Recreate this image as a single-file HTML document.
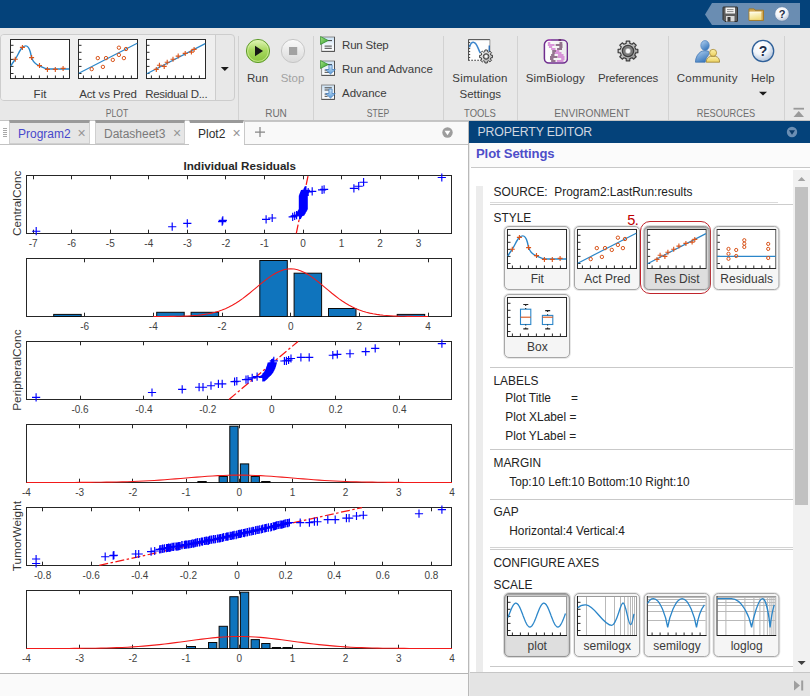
<!DOCTYPE html><html><head><meta charset="utf-8"><title>SimBiology Model Analyzer</title><style>
html,body{margin:0;padding:0;}
body{width:810px;height:696px;overflow:hidden;position:relative;background:#fff;font-family:"Liberation Sans",sans-serif;font-size:12px;color:#333;}
.abs{position:absolute;}
#title{left:0;top:0;width:810px;height:28px;background:#04427a;}
#ts{left:0;top:28px;width:810px;height:92px;background:#e8e8e8;}
#tsline{left:0;top:120px;width:810px;height:1px;background:#c4c4c4;}
.sep{position:absolute;top:36px;width:1px;height:84px;background:#d2d2d2;}
.tl{position:absolute;font-size:11.5px;color:#3c3c3c;white-space:nowrap;transform:translateX(-50%);line-height:14px;}
.tll{position:absolute;font-size:11.5px;color:#3c3c3c;white-space:nowrap;line-height:14px;}
.sec{position:absolute;top:105.8px;font-size:11px;color:#6e6e6e;white-space:nowrap;transform:translateX(-50%) scaleX(0.86);line-height:14px;letter-spacing:0px;}
.tab{position:absolute;top:120px;height:24px;box-sizing:border-box;background:#e6e6e6;border:1px solid #cfcfcf;border-top:3px solid #9a9a9a;font-size:12px;line-height:20px;white-space:nowrap;}
.pt{position:absolute;white-space:nowrap;font-size:11.9px;line-height:14px;color:#222;}
.btn{position:absolute;width:66px;height:64px;box-sizing:border-box;border:1px solid #a8a8a8;border-radius:5px;background:#f5f5f5;box-shadow:0 0 0 1px rgba(150,150,150,0.22);}
.btn.on{background:#dedede;border-color:#949494;box-shadow:inset 0 1px 2px rgba(0,0,0,.35),0 0 0 1px rgba(140,140,140,0.3);}
.btn span{position:absolute;left:0;width:64.6px;text-align:center;top:45.2px;font-size:12px;line-height:14px;color:#3a3a3a;}
.hl{position:absolute;height:1px;background:#c9c9c9;}
</style></head><body>
<div id="title" class="abs"></div>
<svg class="abs" style="left:705px;top:3px" width="96" height="22" viewBox="0 0 96 22" ><polygon points="0,11.5 7,0 95,0 95,22 7,22" fill="#6a8db2"/><g transform="translate(17.5,3.5)"><path d="M0.5,1 Q0.5,0.5 1,0.5 L14.5,0.5 Q15,0.5 15,1 L15,14.5 Q15,15 14.5,15 L2.5,15 L0.5,13 Z" fill="#5e5e5e" stroke="#2f2f2f" stroke-width="1"/><rect x="3" y="1" width="9.5" height="6" fill="#f4f4f4"/><rect x="4.5" y="2.6" width="6.5" height="1" fill="#8a8a8a"/><rect x="4.5" y="4.6" width="6.5" height="1" fill="#8a8a8a"/><rect x="3.5" y="9.5" width="8.5" height="5.5" fill="#d8d8d8"/><rect x="5" y="10.5" width="3" height="4.5" fill="#3a3a3a"/></g><defs><linearGradient id="fg" x1="0" y1="0" x2="0.3" y2="1"><stop offset="0" stop-color="#fffde8"/><stop offset="1" stop-color="#f1de82"/></linearGradient></defs><g transform="translate(43.5,5)"><path d="M0.5,0.9 L5.6,0.9 L6.6,2.2 L15,2.2 L15,12.4 L0.5,12.4 Z" fill="#d2a852" stroke="#a27a2a" stroke-width="1"/><path d="M1,4 L12.9,4 L12.9,11.9 L1,11.9 Z" fill="url(#fg)"/><path d="M1,4 L12.9,4" stroke="#fffef4" stroke-width="0.8"/></g><defs><radialGradient id="hg" cx="0.4" cy="0.3" r="0.8"><stop offset="0" stop-color="#ffffff"/><stop offset="0.5" stop-color="#f2f4f8"/><stop offset="1" stop-color="#a9b7cd"/></radialGradient></defs><circle cx="77" cy="11" r="7.3" fill="url(#hg)" stroke="#5d7fa6" stroke-width="0.8"/><text x="77" y="14.9" font-family="Liberation Sans, sans-serif" font-weight="bold" font-size="11" text-anchor="middle" fill="#1e2e48">?</text></svg>
<div id="ts" class="abs"></div><div id="tsline" class="abs"></div>
<div class="abs" style="left:0;top:34px;width:235px;height:67px;box-sizing:border-box;border:1px solid #cdcdcd;border-radius:4px;background:#e8e8e8;"></div>
<div class="abs" style="left:1px;top:35px;width:214px;height:65px;background:#efefef;border-right:1px solid #cdcdcd;border-radius:3px 0 0 3px;"></div>
<svg class="abs" style="left:10px;top:39px" width="60" height="40" viewBox="0 0 60 40" ><rect x="0.5" y="0.5" width="59" height="39" fill="#fff" stroke="#2a2a2a" stroke-width="1"/><path d="M1,6.3h2.5M1,13.3h2.5M1,20.4h2.5M1,27.4h2.5M1,34.5h2.5M5.4,39v-2.5M13.4,39v-2.5M21.4,39v-2.5M29.4,39v-2.5M37.4,39v-2.5M45.4,39v-2.5M53.4,39v-2.5" stroke="#2a2a2a" stroke-width="1" fill="none"/><path d="M0.8,27 C2.5,24 4,22 5.3,20.2 C8,16 10,10.5 12.4,8.4 C13.8,7.2 14.8,6.9 15.8,6.9 C18,6.9 19.5,10 20.3,13 C21,15.5 21.2,17 21.6,18.6 C23,23 26,25.5 29.5,26.8 C33,28.5 35,29.8 38.5,30 L59.2,30" stroke="#2b86c9" stroke-width="1.4" fill="none"/><path d="M2.8,20.2H7.8M5.3,17.7V22.7" stroke="#d9541a" stroke-width="1.1" fill="none"/><path d="M9.9,8.4H14.9M12.4,5.9V10.9" stroke="#d9541a" stroke-width="1.1" fill="none"/><path d="M19.1,18.6H24.1M21.6,16.1V21.1" stroke="#d9541a" stroke-width="1.1" fill="none"/><path d="M27.0,26.6H32.0M29.5,24.1V29.1" stroke="#d9541a" stroke-width="1.1" fill="none"/><path d="M34.9,30.4H39.9M37.4,27.9V32.9" stroke="#d9541a" stroke-width="1.1" fill="none"/><path d="M42.8,30.4H47.8M45.3,27.9V32.9" stroke="#d9541a" stroke-width="1.1" fill="none"/><path d="M50.6,29.4H55.6M53.1,26.9V31.9" stroke="#d9541a" stroke-width="1.1" fill="none"/></svg>
<svg class="abs" style="left:78px;top:39px" width="60" height="40" viewBox="0 0 60 40" ><rect x="0.5" y="0.5" width="59" height="39" fill="#fff" stroke="#2a2a2a" stroke-width="1"/><path d="M1,6.3h2.5M1,13.3h2.5M1,20.4h2.5M1,27.4h2.5M1,34.5h2.5M5.4,39v-2.5M13.4,39v-2.5M21.4,39v-2.5M29.4,39v-2.5M37.4,39v-2.5M45.4,39v-2.5M53.4,39v-2.5" stroke="#2a2a2a" stroke-width="1" fill="none"/><path d="M0.8,34.2L59.2,4.2" stroke="#2b86c9" stroke-width="1.2" fill="none"/><circle cx="13.7" cy="30.1" r="1.7" stroke="#d9541a" stroke-width="1" fill="none"/><circle cx="19.8" cy="19.1" r="1.7" stroke="#d9541a" stroke-width="1" fill="none"/><circle cx="24.9" cy="27.9" r="1.7" stroke="#d9541a" stroke-width="1" fill="none"/><circle cx="28.0" cy="19.1" r="1.7" stroke="#d9541a" stroke-width="1" fill="none"/><circle cx="34.8" cy="20.9" r="1.7" stroke="#d9541a" stroke-width="1" fill="none"/><circle cx="40.9" cy="8.7" r="1.7" stroke="#d9541a" stroke-width="1" fill="none"/><circle cx="40.9" cy="15.9" r="1.7" stroke="#d9541a" stroke-width="1" fill="none"/><circle cx="45.9" cy="19.1" r="1.7" stroke="#d9541a" stroke-width="1" fill="none"/><circle cx="48.0" cy="10.0" r="1.7" stroke="#d9541a" stroke-width="1" fill="none"/></svg>
<svg class="abs" style="left:146px;top:39px" width="60" height="40" viewBox="0 0 60 40" ><rect x="0.5" y="0.5" width="59" height="39" fill="#fff" stroke="#2a2a2a" stroke-width="1"/><path d="M1,6.3h2.5M1,13.3h2.5M1,20.4h2.5M1,27.4h2.5M1,34.5h2.5M5.4,39v-2.5M13.4,39v-2.5M21.4,39v-2.5M29.4,39v-2.5M37.4,39v-2.5M45.4,39v-2.5M53.4,39v-2.5" stroke="#2a2a2a" stroke-width="1" fill="none"/><path d="M0.8,34.7L59.2,4.6" stroke="#2b86c9" stroke-width="1.2" fill="none"/><path d="M7.8,30.4H12.8M10.3,27.9V32.9" stroke="#d9541a" stroke-width="1.1" fill="none"/><path d="M10.9,26.3H15.9M13.4,23.8V28.8" stroke="#d9541a" stroke-width="1.1" fill="none"/><path d="M15.7,27.4H20.7M18.2,24.9V29.9" stroke="#d9541a" stroke-width="1.1" fill="none"/><path d="M18.7,23.2H23.7M21.2,20.7V25.7" stroke="#d9541a" stroke-width="1.1" fill="none"/><path d="M24.5,20.2H29.5M27.0,17.7V22.7" stroke="#d9541a" stroke-width="1.1" fill="none"/><path d="M29.7,17.1H34.7M32.2,14.6V19.6" stroke="#d9541a" stroke-width="1.1" fill="none"/><path d="M36.7,14.4H41.7M39.2,11.9V16.9" stroke="#d9541a" stroke-width="1.1" fill="none"/><path d="M42.9,13.1H47.9M45.4,10.6V15.6" stroke="#d9541a" stroke-width="1.1" fill="none"/><path d="M45.6,10.4H50.6M48.1,7.9V12.9" stroke="#d9541a" stroke-width="1.1" fill="none"/></svg>
<svg class="abs" style="left:220px;top:66px" width="10" height="6" viewBox="0 0 10 6" ><polygon points="0.8,1 8.8,1 4.8,5" fill="#1a1a1a"/></svg>
<div class="tl" style="left:40px;top:87.32px;font-size:11.5px;letter-spacing:0px;">Fit</div>
<div class="tl" style="left:108px;top:87.32px;font-size:11.5px;letter-spacing:-0.1px;">Act vs Pred</div>
<div class="tl" style="left:176.3px;top:87.32px;font-size:11.5px;letter-spacing:-0.27px;">Residual D...</div>
<div class="sep" style="left:238px"></div>
<div class="sep" style="left:313px"></div>
<div class="sep" style="left:442.5px"></div>
<div class="sep" style="left:516.5px"></div>
<div class="sep" style="left:667.5px"></div>
<div class="sep" style="left:784px"></div>
<div class="sec" style="left:117.2px;transform:translateX(-50%) scaleX(0.784)">PLOT</div>
<div class="sec" style="left:275.5px;transform:translateX(-50%) scaleX(0.91)">RUN</div>
<div class="sec" style="left:378.3px;transform:translateX(-50%) scaleX(0.784)">STEP</div>
<div class="sec" style="left:480px;transform:translateX(-50%) scaleX(0.858)">TOOLS</div>
<div class="sec" style="left:592.2px;transform:translateX(-50%) scaleX(0.929)">ENVIRONMENT</div>
<div class="sec" style="left:726.2px;transform:translateX(-50%) scaleX(0.838)">RESOURCES</div>
<svg class="abs" style="left:244.8px;top:38px" width="26" height="26" viewBox="0 0 26 26" ><defs><linearGradient id="rg" x1="0" y1="0" x2="0" y2="1"><stop offset="0" stop-color="#e4f6bc"/><stop offset="0.45" stop-color="#a9d960"/><stop offset="1" stop-color="#86c23a"/></linearGradient><linearGradient id="sg" x1="0" y1="0" x2="0" y2="1"><stop offset="0" stop-color="#fafafa"/><stop offset="1" stop-color="#dadada"/></linearGradient></defs><circle cx="13" cy="13" r="11.6" fill="url(#rg)" stroke="#5f9c2c" stroke-width="1"/><circle cx="13" cy="13" r="10.4" fill="none" stroke="#d6f0a4" stroke-width="0.9" opacity=".8"/><polygon points="10,7.8 10,18.2 18,13" fill="#161616"/></svg>
<svg class="abs" style="left:279.6px;top:38px" width="26" height="26" viewBox="0 0 26 26" ><circle cx="13" cy="13" r="11.6" fill="url(#sg)" stroke="#c6c6c6" stroke-width="1"/><rect x="9" y="9" width="8.2" height="8" fill="#a2a2a2"/></svg>
<div class="tl" style="left:257.5px;top:70.62px;font-size:11.5px;">Run</div>
<div class="tl" style="left:292.5px;top:70.62px;font-size:11.5px;color:#a2a2a2;">Stop</div>
<svg class="abs" style="left:319.5px;top:35.5px" width="17" height="17" viewBox="0 0 17 17" ><defs><linearGradient id="dga" x1="0" y1="0" x2="0" y2="1"><stop offset="0" stop-color="#c9e0f3"/><stop offset="0.6" stop-color="#f4f8fc"/><stop offset="1" stop-color="#ffffff"/></linearGradient><linearGradient id="tga" x1="0" y1="0" x2="1" y2="1"><stop offset="0" stop-color="#a6e684"/><stop offset="1" stop-color="#2f9a2a"/></linearGradient><linearGradient id="aga" x1="0" y1="0" x2="0" y2="1"><stop offset="0" stop-color="#d4e8f8"/><stop offset="1" stop-color="#5a9ad8"/></linearGradient></defs><rect x="1.6" y="1.0" width="12.9" height="14.4" fill="url(#dga)" stroke="#8c8c8c" stroke-width="1"/><path d="M1.6,15.4H14.5V1.0" stroke="#505050" stroke-width="1" fill="none"/><path d="M8,4.6h4M4.6,10.1h7.2M4.6,12.3h7.2" stroke="#444" stroke-width="1"/><polygon points="0.4,0.5 0.4,8.5 8.3,4.5" fill="url(#tga)" stroke="#2b8a28" stroke-width="0.7"/></svg>
<svg class="abs" style="left:319.5px;top:59.5px" width="17" height="17" viewBox="0 0 17 17" ><defs><linearGradient id="dgb" x1="0" y1="0" x2="0" y2="1"><stop offset="0" stop-color="#c9e0f3"/><stop offset="0.6" stop-color="#f4f8fc"/><stop offset="1" stop-color="#ffffff"/></linearGradient><linearGradient id="tgb" x1="0" y1="0" x2="1" y2="1"><stop offset="0" stop-color="#a6e684"/><stop offset="1" stop-color="#2f9a2a"/></linearGradient><linearGradient id="agb" x1="0" y1="0" x2="0" y2="1"><stop offset="0" stop-color="#d4e8f8"/><stop offset="1" stop-color="#5a9ad8"/></linearGradient></defs><rect x="1.6" y="1.0" width="12.9" height="14.4" fill="url(#dgb)" stroke="#8c8c8c" stroke-width="1"/><path d="M1.6,15.4H14.5V1.0" stroke="#505050" stroke-width="1" fill="none"/><path d="M8,4.6h4M4.6,10.1h7.2M4.6,12.3h7.2" stroke="#444" stroke-width="1"/><polygon points="0.4,0.5 0.4,8.5 8.3,4.5" fill="url(#tgb)" stroke="#2b8a28" stroke-width="0.7"/><path d="M8.9,5.1h3.2v4.4h3.2l-4.8,4.6l-4.8,-4.6h3.2z" fill="url(#agb)" stroke="#3a76b8" stroke-width="0.7"/></svg>
<svg class="abs" style="left:319.5px;top:83.6px" width="17" height="17" viewBox="0 0 17 17" ><defs><linearGradient id="dgc" x1="0" y1="0" x2="0" y2="1"><stop offset="0" stop-color="#c9e0f3"/><stop offset="0.6" stop-color="#f4f8fc"/><stop offset="1" stop-color="#ffffff"/></linearGradient><linearGradient id="tgc" x1="0" y1="0" x2="1" y2="1"><stop offset="0" stop-color="#a6e684"/><stop offset="1" stop-color="#2f9a2a"/></linearGradient><linearGradient id="agc" x1="0" y1="0" x2="0" y2="1"><stop offset="0" stop-color="#d4e8f8"/><stop offset="1" stop-color="#5a9ad8"/></linearGradient></defs><rect x="1.6" y="1.0" width="12.9" height="14.4" fill="url(#dgc)" stroke="#8c8c8c" stroke-width="1"/><path d="M1.6,15.4H14.5V1.0" stroke="#505050" stroke-width="1" fill="none"/><path d="M4.6,3.8h7.2M4.6,6h7.2M4.6,10.1h3M4.6,12.3h3" stroke="#444" stroke-width="1"/><path d="M8.9,5.1h3.2v4.4h3.2l-4.8,4.6l-4.8,-4.6h3.2z" fill="url(#agc)" stroke="#3a76b8" stroke-width="0.7"/></svg>
<div class="tll" style="left:342px;top:38.12px;font-size:11.5px;letter-spacing:-0.17px;">Run Step</div>
<div class="tll" style="left:342px;top:61.92px;font-size:11.5px;">Run and Advance</div>
<div class="tll" style="left:342px;top:85.82px;font-size:11.5px;">Advance</div>
<svg class="abs" style="left:468px;top:39px" width="25" height="25" viewBox="0 0 25 25" ><defs><linearGradient id="g2" x1="0" y1="0" x2="1" y2="1"><stop offset="0" stop-color="#ffffff"/><stop offset="1" stop-color="#a9a9a9"/></linearGradient></defs><rect x="0.5" y="0.5" width="21.5" height="21.2" fill="#fefefe"/><path d="M0.3,0.6H22" stroke="#555" stroke-width="1.1" fill="none"/><path d="M21.9,0.6V21.5" stroke="#9a9a9a" stroke-width="1" fill="none"/><path d="M0.6,0.6V21.5" stroke="#444" stroke-width="1" fill="none"/><path d="M0.6,3.5h1.6M0.6,6.5h1.6M0.6,9.5h1.6M0.6,12.5h1.6M0.6,15.5h1.6M0.6,18.5h1.6" stroke="#444" stroke-width="1" fill="none"/><path d="M0.3,21.3H22" stroke="#333" stroke-width="1.1" fill="none" stroke-dasharray="1.6,1.4"/><path d="M1.5,8.3 C2.5,4.5 4.5,3.2 5.9,3.4 C9.2,3.9 10,10.5 12.4,14" stroke="#3d86cc" stroke-width="1.5" fill="none"/><path d="M21.2,12.5 C21.3,9.5 21.3,8 21.3,6.5" stroke="#2f6fb5" stroke-width="1.4" fill="none"/><path d="M16.91,11.01L19.29,11.01L19.38,12.67L20.61,13.18L21.85,12.07L23.53,13.75L22.42,14.99L22.93,16.22L24.59,16.31L24.59,18.69L22.93,18.78L22.42,20.01L23.53,21.25L21.85,22.93L20.61,21.82L19.38,22.33L19.29,23.99L16.91,23.99L16.82,22.33L15.59,21.82L14.35,22.93L12.67,21.25L13.78,20.01L13.27,18.78L11.61,18.69L11.61,16.31L13.27,16.22L13.78,14.99L12.67,13.75L14.35,12.07L15.59,13.18L16.82,12.67Z" fill="url(#g2)" stroke="#3e3e3e" stroke-width="1" stroke-linejoin="round"/><circle cx="18.1" cy="17.5" r="2.8" fill="#9a9a9a" stroke="#3e3e3e" stroke-width="1"/><circle cx="18.1" cy="17.5" r="1.4" fill="#fafafa"/></svg>
<div class="tl" style="left:480px;top:70.62px;font-size:11.5px;letter-spacing:0.16px;">Simulation</div>
<div class="tl" style="left:480.3px;top:86.52px;font-size:11.5px;">Settings</div>
<svg class="abs" style="left:542.5px;top:38.5px" width="25" height="25" viewBox="0 0 25 25" ><defs><linearGradient id="sbg" x1="0" y1="0" x2="1" y2="0"><stop offset="0" stop-color="#ffffff"/><stop offset="1" stop-color="#ececec"/></linearGradient></defs><rect x="1.4" y="1.1" width="23" height="23" rx="4.5" fill="url(#sbg)" stroke="#6f2d8e" stroke-width="1.5"/><path d="M5.3,1.0H8.3" stroke="#c44fc4" stroke-width="1.15"/><path d="M15.5,1.0H18.2" stroke="#4a1440" stroke-width="1.15"/><path d="M4.8,4.0H7.3" stroke="#c44fc4" stroke-width="1.15"/><path d="M16.5,4.0H19.3" stroke="#4a1440" stroke-width="1.15"/><path d="M4.8,6.0H11.5" stroke="#c44fc4" stroke-width="1.15"/><path d="M12.7,6.0H19.5" stroke="#4a1440" stroke-width="1.15"/><path d="M5.9,8.0H9.2" stroke="#c44fc4" stroke-width="1.15"/><path d="M16.3,8.0H19.5" stroke="#4a1440" stroke-width="1.15"/><path d="M8.1,10.0H12.5" stroke="#c44fc4" stroke-width="1.15"/><path d="M14.1,10.0H19.0" stroke="#4a1440" stroke-width="1.15"/><path d="M9.2,12.0H13.0" stroke="#4a1440" stroke-width="1.15"/><path d="M13.0,12.0H16.3" stroke="#c44fc4" stroke-width="1.15"/><path d="M9.2,14.0H11.9" stroke="#4a1440" stroke-width="1.15"/><path d="M11.9,14.0H18.5" stroke="#c44fc4" stroke-width="1.15"/><path d="M8.1,16.0H11.5" stroke="#4a1440" stroke-width="1.15"/><path d="M14.9,16.0H20.5" stroke="#c44fc4" stroke-width="1.15"/><path d="M7.0,18.0H14.5" stroke="#4a1440" stroke-width="1.15"/><path d="M14.9,18.0H21.5" stroke="#c44fc4" stroke-width="1.15"/><path d="M7.0,20.0H10.5" stroke="#4a1440" stroke-width="1.15"/><path d="M18.2,20.0H21.5" stroke="#c44fc4" stroke-width="1.15"/><path d="M8.1,22.0H12.5" stroke="#4a1440" stroke-width="1.15"/><path d="M13.8,22.0H20.5" stroke="#c44fc4" stroke-width="1.15"/></svg>
<div class="tl" style="left:555.4px;top:70.72px;font-size:11.5px;letter-spacing:0.17px;">SimBiology</div>
<svg class="abs" style="left:617.1px;top:39.7px" width="22" height="22" viewBox="0 0 22 22" ><defs><linearGradient id="gg" x1="0" y1="0" x2="1" y2="1"><stop offset="0" stop-color="#ececec"/><stop offset="1" stop-color="#8c8c8c"/></linearGradient></defs><path d="M9.28,1.15L12.72,1.15L12.84,3.32L15.13,4.26L16.75,2.82L19.18,5.25L17.74,6.87L18.68,9.16L20.85,9.28L20.85,12.72L18.68,12.84L17.74,15.13L19.18,16.75L16.75,19.18L15.13,17.74L12.84,18.68L12.72,20.85L9.28,20.85L9.16,18.68L6.87,17.74L5.25,19.18L2.82,16.75L4.26,15.13L3.32,12.84L1.15,12.72L1.15,9.28L3.32,9.16L4.26,6.87L2.82,5.25L5.25,2.82L6.87,4.26L9.16,3.32Z" fill="url(#gg)" stroke="#3c3c3c" stroke-width="1.2" stroke-linejoin="round"/><circle cx="11" cy="11" r="5.6" fill="#828282" stroke="#3e3e3e" stroke-width="1.3"/><circle cx="11" cy="11" r="3.6" fill="#a8a8a8" stroke="#6a6a6a" stroke-width="0.8"/><circle cx="11" cy="11" r="2.2" fill="#f6f6f6"/></svg>
<div class="tl" style="left:628px;top:70.72px;font-size:11.5px;letter-spacing:-0.16px;">Preferences</div>
<svg class="abs" style="left:695px;top:39.7px" width="25" height="23" viewBox="0 0 25 23" ><defs><linearGradient id="cb" x1="0" y1="0" x2="0.6" y2="1"><stop offset="0" stop-color="#b4d3f1"/><stop offset="1" stop-color="#3a78bd"/></linearGradient><linearGradient id="cy" x1="0" y1="0" x2="0" y2="1"><stop offset="0" stop-color="#fbf0a8"/><stop offset="1" stop-color="#ecd160"/></linearGradient></defs><path d="M0.4,22.2 C0.6,17 3,13.6 6,11.6 C7.5,10.7 12.2,10.4 13.6,11.4 C14.9,12.4 14.2,14.2 12.6,16.2 C11.2,18 10.4,20 10.2,22.2 Z" fill="url(#cb)" stroke="#3a6fae" stroke-width="0.7"/><ellipse cx="10" cy="5.5" rx="4.2" ry="4.9" fill="url(#cb)" stroke="#4a80bd" stroke-width="0.7"/><path d="M11.2,22.2 C11.2,18.6 13,17 15.6,16.4 L20.6,16.4 C23.2,17 24.6,18.6 24.6,22.2 Z" fill="url(#cy)" stroke="#9c8030" stroke-width="0.8"/><circle cx="18.1" cy="12.8" r="3.5" fill="url(#cy)" stroke="#a88c38" stroke-width="0.8"/></svg>
<div class="tl" style="left:707.2px;top:70.72px;font-size:11.5px;letter-spacing:0.32px;">Community</div>
<svg class="abs" style="left:750.8px;top:39.1px" width="24" height="24" viewBox="0 0 24 24" ><defs><radialGradient id="hg2" cx="0.4" cy="0.3" r="0.8"><stop offset="0" stop-color="#ffffff"/><stop offset="0.45" stop-color="#f3f6fa"/><stop offset="1" stop-color="#9db3d0"/></radialGradient></defs><circle cx="12" cy="12" r="10.7" fill="url(#hg2)" stroke="#2f6099" stroke-width="1.3"/><text x="12" y="16.9" font-family="Liberation Sans, sans-serif" font-weight="bold" font-size="14" text-anchor="middle" fill="#1f2f4a">?</text></svg>
<div class="tl" style="left:762.8px;top:70.72px;font-size:11.5px;">Help</div>
<svg class="abs" style="left:758px;top:90.5px" width="10" height="6" viewBox="0 0 10 6" ><polygon points="1,0.8 9,0.8 5,4.6" fill="#1a1a1a"/></svg>
<svg class="abs" style="left:792.5px;top:106.5px" width="12" height="11" viewBox="0 0 12 11" ><rect x="0.5" y="0.8" width="10.5" height="1.8" fill="#9a9a9a"/><polygon points="0.5,10 11,10 5.75,4" fill="#9a9a9a"/></svg>
<div class="abs" style="left:0;top:121px;width:468px;height:24px;background:#fff;"></div>
<div class="abs" style="left:244px;top:121px;width:224px;height:23px;background:#f9f9f9;"></div>
<div class="abs" style="left:244px;top:121px;width:224px;height:1px;background:#c6c6c6;"></div>
<div class="abs" style="left:244px;top:121px;width:1px;height:23px;background:#c9c9c9;"></div>
<div class="abs" style="left:0;top:144px;width:468px;height:1px;background:#c2c2c2;"></div>
<div class="abs" style="left:3px;top:128px;width:4px;height:9px;background:repeating-linear-gradient(#a8a8a8 0,#a8a8a8 1px,#fff 1px,#fff 2px);"></div>
<div class="tab" style="left:9px;width:81px;"><span style="position:absolute;left:8px;top:0.8px;color:#4848cc">Program2</span><span style="position:absolute;left:67.5px;top:0.2px;color:#959595;font-size:14px;">×</span></div>
<div class="tab" style="left:95px;width:90px;"><span style="position:absolute;left:8px;top:0.8px;color:#7a7a7a">Datasheet3</span><span style="position:absolute;left:77px;top:0.2px;color:#959595;font-size:14px;">×</span></div>
<div class="tab" style="left:189px;width:55px;background:#fff;border-color:#fff;border-top:3px solid #9a9a9a;height:25px;"><span style="position:absolute;left:8px;top:0.8px;color:#2c2c2c">Plot2</span><span style="position:absolute;left:42.5px;top:0.2px;color:#959595;font-size:14px;">×</span></div>
<svg class="abs" style="left:254px;top:126px" width="12" height="12" viewBox="0 0 12 12" ><path d="M6,1V11M1,6H11" stroke="#868686" stroke-width="1.25" fill="none"/></svg>
<svg class="abs" style="left:442px;top:126.5px" width="11" height="11" viewBox="0 0 11 11" ><circle cx="5.5" cy="5.5" r="5.2" fill="#9d9d9d"/><polygon points="2.6,3.8 8.4,3.8 5.5,8.2" fill="#fff"/></svg>
<div class="abs" style="left:468px;top:121px;width:1px;height:575px;background:#b9b9b9;"></div>
<div class="abs" style="left:469px;top:121px;width:1px;height:575px;background:#e9e9e9;"></div>
<div class="abs" style="left:0;top:673px;width:468px;height:23px;background:#fafafa;border-top:1px solid #b4b4b4;box-sizing:border-box;"></div>
<div class="abs" style="left:469px;top:121px;width:341px;height:22px;background:#04427a;"></div>
<div class="pt" style="left:477.5px;top:125.04px;font-size:12.3px;color:#d0d7e0;letter-spacing:-0.15px;">PROPERTY EDITOR</div>
<svg class="abs" style="left:786px;top:126px" width="12" height="12" viewBox="0 0 12 12" ><circle cx="6" cy="6" r="5.2" fill="#6b8eb3"/><polygon points="3,4.2 9,4.2 6,8.8" fill="#0b3a68"/></svg>
<div class="abs" style="left:470px;top:143px;width:340px;height:24px;background:#fbfbfb;"></div>
<div class="pt" style="left:476px;top:146.96px;font-size:13.1px;color:#4e4ec9;font-weight:bold;letter-spacing:-0.12px;">Plot Settings</div>
<div class="hl" style="left:471px;top:167px;width:339px;background:#c8c8c8"></div>
<div class="abs" style="left:475.5px;top:186px;width:7.5px;height:486px;background:#ececec;"></div>
<div class="abs" style="left:793px;top:170px;width:17px;height:502px;background:#f1f1f1;"></div>
<div class="abs" style="left:795px;top:187px;width:13px;height:318px;background:#c1c1c1;"></div>
<svg class="abs" style="left:797px;top:176px" width="10" height="6" viewBox="0 0 10 6" ><polygon points="0.8,5 8.4,5 4.6,1" fill="#a3a3a3"/></svg>
<svg class="abs" style="left:797px;top:660px" width="10" height="6" viewBox="0 0 10 6" ><polygon points="0.6,1 8.6,1 4.6,5" fill="#404040"/></svg>
<div class="pt" style="left:493.5px;top:185.38px;font-size:11.9px;">SOURCE:&nbsp; Program2:LastRun:results</div>
<div class="hl" style="left:489.5px;top:201.6px;width:288.5px;background:#dadada"></div>
<div class="hl" style="left:489.5px;top:204px;width:303.5px;background:#cdcdcd"></div>
<div class="pt" style="left:493.5px;top:210.58px;font-size:11.9px;">STYLE</div>
<div class="btn" style="left:504px;top:226px;transform:translateX(0px);"><svg style="position:absolute;left:2px;top:2px" width="60" height="40" viewBox="0 0 60 40"><rect x="0.5" y="0.5" width="59" height="39" fill="#fff" stroke="#2a2a2a" stroke-width="1"/><path d="M1,6.3h2.5M1,13.3h2.5M1,20.4h2.5M1,27.4h2.5M1,34.5h2.5M5.4,39v-2.5M13.4,39v-2.5M21.4,39v-2.5M29.4,39v-2.5M37.4,39v-2.5M45.4,39v-2.5M53.4,39v-2.5" stroke="#2a2a2a" stroke-width="1" fill="none"/><path d="M0.8,27 C2.5,24 4,22 5.3,20.2 C8,16 10,10.5 12.4,8.4 C13.8,7.2 14.8,6.9 15.8,6.9 C18,6.9 19.5,10 20.3,13 C21,15.5 21.2,17 21.6,18.6 C23,23 26,25.5 29.5,26.8 C33,28.5 35,29.8 38.5,30 L59.2,30" stroke="#2b86c9" stroke-width="1.4" fill="none"/><path d="M2.8,20.2H7.8M5.3,17.7V22.7" stroke="#d9541a" stroke-width="1.1" fill="none"/><path d="M9.9,8.4H14.9M12.4,5.9V10.9" stroke="#d9541a" stroke-width="1.1" fill="none"/><path d="M19.1,18.6H24.1M21.6,16.1V21.1" stroke="#d9541a" stroke-width="1.1" fill="none"/><path d="M27.0,26.6H32.0M29.5,24.1V29.1" stroke="#d9541a" stroke-width="1.1" fill="none"/><path d="M34.9,30.4H39.9M37.4,27.9V32.9" stroke="#d9541a" stroke-width="1.1" fill="none"/><path d="M42.8,30.4H47.8M45.3,27.9V32.9" stroke="#d9541a" stroke-width="1.1" fill="none"/><path d="M50.6,29.4H55.6M53.1,26.9V31.9" stroke="#d9541a" stroke-width="1.1" fill="none"/></svg><span>Fit</span></div>
<div class="btn" style="left:574px;top:226px;transform:translateX(0px);"><svg style="position:absolute;left:2px;top:2px" width="60" height="40" viewBox="0 0 60 40"><rect x="0.5" y="0.5" width="59" height="39" fill="#fff" stroke="#2a2a2a" stroke-width="1"/><path d="M1,6.3h2.5M1,13.3h2.5M1,20.4h2.5M1,27.4h2.5M1,34.5h2.5M5.4,39v-2.5M13.4,39v-2.5M21.4,39v-2.5M29.4,39v-2.5M37.4,39v-2.5M45.4,39v-2.5M53.4,39v-2.5" stroke="#2a2a2a" stroke-width="1" fill="none"/><path d="M0.8,34.2L59.2,4.2" stroke="#2b86c9" stroke-width="1.2" fill="none"/><circle cx="13.7" cy="30.1" r="1.7" stroke="#d9541a" stroke-width="1" fill="none"/><circle cx="19.8" cy="19.1" r="1.7" stroke="#d9541a" stroke-width="1" fill="none"/><circle cx="24.9" cy="27.9" r="1.7" stroke="#d9541a" stroke-width="1" fill="none"/><circle cx="28.0" cy="19.1" r="1.7" stroke="#d9541a" stroke-width="1" fill="none"/><circle cx="34.8" cy="20.9" r="1.7" stroke="#d9541a" stroke-width="1" fill="none"/><circle cx="40.9" cy="8.7" r="1.7" stroke="#d9541a" stroke-width="1" fill="none"/><circle cx="40.9" cy="15.9" r="1.7" stroke="#d9541a" stroke-width="1" fill="none"/><circle cx="45.9" cy="19.1" r="1.7" stroke="#d9541a" stroke-width="1" fill="none"/><circle cx="48.0" cy="10.0" r="1.7" stroke="#d9541a" stroke-width="1" fill="none"/></svg><span>Act Pred</span></div>
<div class="abs" style="left:640px;top:221.2px;width:71px;height:73px;box-sizing:border-box;border:1.4px solid #c0242c;border-radius:10px;"></div>
<div class="btn on" style="left:644px;top:226px;transform:translateX(-0.3px);"><svg style="position:absolute;left:2px;top:2px" width="60" height="40" viewBox="0 0 60 40"><rect x="0.5" y="0.5" width="59" height="39" fill="#fff" stroke="#2a2a2a" stroke-width="1"/><path d="M1,6.3h2.5M1,13.3h2.5M1,20.4h2.5M1,27.4h2.5M1,34.5h2.5M5.4,39v-2.5M13.4,39v-2.5M21.4,39v-2.5M29.4,39v-2.5M37.4,39v-2.5M45.4,39v-2.5M53.4,39v-2.5" stroke="#2a2a2a" stroke-width="1" fill="none"/><path d="M0.8,34.7L59.2,4.6" stroke="#2b86c9" stroke-width="1.2" fill="none"/><path d="M7.8,30.4H12.8M10.3,27.9V32.9" stroke="#d9541a" stroke-width="1.1" fill="none"/><path d="M10.9,26.3H15.9M13.4,23.8V28.8" stroke="#d9541a" stroke-width="1.1" fill="none"/><path d="M15.7,27.4H20.7M18.2,24.9V29.9" stroke="#d9541a" stroke-width="1.1" fill="none"/><path d="M18.7,23.2H23.7M21.2,20.7V25.7" stroke="#d9541a" stroke-width="1.1" fill="none"/><path d="M24.5,20.2H29.5M27.0,17.7V22.7" stroke="#d9541a" stroke-width="1.1" fill="none"/><path d="M29.7,17.1H34.7M32.2,14.6V19.6" stroke="#d9541a" stroke-width="1.1" fill="none"/><path d="M36.7,14.4H41.7M39.2,11.9V16.9" stroke="#d9541a" stroke-width="1.1" fill="none"/><path d="M42.9,13.1H47.9M45.4,10.6V15.6" stroke="#d9541a" stroke-width="1.1" fill="none"/><path d="M45.6,10.4H50.6M48.1,7.9V12.9" stroke="#d9541a" stroke-width="1.1" fill="none"/></svg><span>Res Dist</span></div>
<div class="btn" style="left:714px;top:226px;transform:translateX(-0.6px);"><svg style="position:absolute;left:2px;top:2px" width="60" height="40" viewBox="0 0 60 40"><rect x="0.5" y="0.5" width="59" height="39" fill="#fff" stroke="#2a2a2a" stroke-width="1"/><path d="M1,6.3h2.5M1,13.3h2.5M1,20.4h2.5M1,27.4h2.5M1,34.5h2.5M5.4,39v-2.5M13.4,39v-2.5M21.4,39v-2.5M29.4,39v-2.5M37.4,39v-2.5M45.4,39v-2.5M53.4,39v-2.5" stroke="#2a2a2a" stroke-width="1" fill="none"/><path d="M0.8,27.4H59.2" stroke="#2b86c9" stroke-width="1.2" fill="none"/><circle cx="12.1" cy="19.9" r="1.6" stroke="#d9541a" stroke-width="1" fill="none"/><circle cx="12.1" cy="24.8" r="1.6" stroke="#d9541a" stroke-width="1" fill="none"/><circle cx="12.1" cy="29.8" r="1.6" stroke="#d9541a" stroke-width="1" fill="none"/><circle cx="19.8" cy="21.0" r="1.6" stroke="#d9541a" stroke-width="1" fill="none"/><circle cx="19.8" cy="27.0" r="1.6" stroke="#d9541a" stroke-width="1" fill="none"/><circle cx="27.9" cy="11.2" r="1.6" stroke="#d9541a" stroke-width="1" fill="none"/><circle cx="27.9" cy="14.7" r="1.6" stroke="#d9541a" stroke-width="1" fill="none"/><circle cx="27.9" cy="18.0" r="1.6" stroke="#d9541a" stroke-width="1" fill="none"/><circle cx="51.8" cy="14.9" r="1.6" stroke="#d9541a" stroke-width="1" fill="none"/><circle cx="51.8" cy="19.9" r="1.6" stroke="#d9541a" stroke-width="1" fill="none"/><circle cx="51.8" cy="29.0" r="1.6" stroke="#d9541a" stroke-width="1" fill="none"/></svg><span>Residuals</span></div>
<div class="btn" style="left:504px;top:294px;transform:translateX(0px);"><svg style="position:absolute;left:2px;top:2px" width="60" height="40" viewBox="0 0 60 40"><rect x="0.5" y="0.5" width="59" height="39" fill="#fff" stroke="#2a2a2a" stroke-width="1"/><path d="M1,6.3h2.5M1,13.3h2.5M1,20.4h2.5M1,27.4h2.5M1,34.5h2.5M5.4,39v-2.5M13.4,39v-2.5M21.4,39v-2.5M29.4,39v-2.5M37.4,39v-2.5M45.4,39v-2.5M53.4,39v-2.5" stroke="#2a2a2a" stroke-width="1" fill="none"/><rect x="13.5" y="12.2" width="10.3" height="15.3" fill="#fff" stroke="#2b86c9" stroke-width="1.1"/><path d="M13.5,20.2h10.3" stroke="#d9541a" stroke-width="1.1"/><path d="M16.3,7.5h5M16.3,31.9h5M18.7,7.5v1.5M18.7,30.5v1.4M18.7,11v1M18.7,27.5v1" stroke="#222" stroke-width="1.1" fill="none"/><rect x="35.4" y="18.4" width="10.4" height="9.1" fill="#fff" stroke="#2b86c9" stroke-width="1.1"/><path d="M35.4,20.2h10.4" stroke="#d9541a" stroke-width="1.1"/><path d="M38.2,13.6h5M38.2,31.9h5M40.6,13.6v1.5M40.6,30.5v1.4M40.6,17.3v1M40.6,27.5v1" stroke="#222" stroke-width="1.1" fill="none"/></svg><span>Box</span></div>
<div class="pt" style="left:627.2px;top:212.64px;font-size:14.6px;color:#c00000;letter-spacing:-0.6px;">5.</div>
<div class="hl" style="left:489.5px;top:367px;width:303.5px;"></div>
<div class="pt" style="left:493.5px;top:373.88px;font-size:11.9px;">LABELS</div>
<div class="pt" style="left:505.3px;top:390.68px;font-size:11.9px;">Plot Title</div>
<div class="pt" style="left:571px;top:390.68px;font-size:11.9px;">=</div>
<div class="pt" style="left:505.3px;top:410.38px;font-size:11.9px;">Plot XLabel =</div>
<div class="pt" style="left:505.3px;top:429.38px;font-size:11.9px;">Plot YLabel =</div>
<div class="hl" style="left:489.5px;top:449.3px;width:303.5px;"></div>
<div class="pt" style="left:493.5px;top:455.58px;font-size:11.9px;">MARGIN</div>
<div class="pt" style="left:509.2px;top:474.68px;font-size:11.9px;">Top:10 Left:10 Bottom:10 Right:10</div>
<div class="hl" style="left:489.5px;top:498.5px;width:303.5px;"></div>
<div class="pt" style="left:493.5px;top:504.98px;font-size:11.9px;">GAP</div>
<div class="pt" style="left:509.2px;top:523.78px;font-size:11.9px;">Horizontal:4 Vertical:4</div>
<div class="hl" style="left:489.5px;top:547px;width:303.5px;background:#d4d4d4"></div>
<div class="hl" style="left:489.5px;top:549px;width:303.5px;background:#cdcdcd"></div>
<div class="pt" style="left:493.5px;top:556.38px;font-size:11.9px;">CONFIGURE AXES</div>
<div class="pt" style="left:493.5px;top:577.88px;font-size:11.9px;">SCALE</div>
<div class="btn on" style="left:504px;top:593px;transform:translateX(0px);"><svg style="position:absolute;left:2px;top:2px" width="60" height="40" viewBox="0 0 60 40"><rect x="0.5" y="0.5" width="59" height="39" fill="#fff" stroke="#9c9c9c" stroke-width="1"/><path d="M0.5,0V39.5H60" stroke="#1e1e1e" stroke-width="1" fill="none"/><path d="M1,6.3h2.5M1,13.3h2.5M1,20.4h2.5M1,27.4h2.5M1,34.5h2.5M5.4,39v-2.5M13.4,39v-2.5M21.4,39v-2.5M29.4,39v-2.5M37.4,39v-2.5M45.4,39v-2.5M53.4,39v-2.5" stroke="#2a2a2a" stroke-width="1" fill="none"/><path d="M1.0,21.5L1.5,20.2L2.0,18.8L2.5,17.5L3.0,16.2L3.5,14.9L4.0,13.7L4.5,12.5L5.0,11.5L5.5,10.5L6.0,9.6L6.5,8.9L7.0,8.3L7.5,7.8L8.0,7.4L8.5,7.2L9.0,7.2L9.5,7.3L10.0,7.6L10.5,8.0L11.0,8.5L11.5,9.2L12.0,10.0L12.5,10.9L13.0,11.9L13.5,13.0L14.0,14.2L14.5,15.4L15.0,16.7L15.5,18.0L16.0,19.4L16.5,20.7L17.0,22.0L17.5,23.3L18.0,24.5L18.5,25.7L19.0,26.7L19.5,27.7L20.0,28.6L20.5,29.3L21.0,29.9L21.5,30.4L22.0,30.8L22.5,31.0L23.0,31.0L23.5,30.9L24.0,30.6L24.5,30.2L25.0,29.7L25.5,29.0L26.0,28.2L26.5,27.3L27.0,26.3L27.5,25.2L28.0,24.0L28.5,22.8L29.0,21.5L29.5,20.2L30.0,18.8L30.5,17.5L31.0,16.2L31.5,14.9L32.0,13.7L32.5,12.5L33.0,11.5L33.5,10.5L34.0,9.6L34.5,8.9L35.0,8.3L35.5,7.8L36.0,7.4L36.5,7.2L37.0,7.2L37.5,7.3L38.0,7.6L38.5,8.0L39.0,8.5L39.5,9.2L40.0,10.0L40.5,10.9L41.0,11.9L41.5,13.0L42.0,14.2L42.5,15.4L43.0,16.7L43.5,18.0L44.0,19.4L44.5,20.7L45.0,22.0L45.5,23.3L46.0,24.5L46.5,25.7L47.0,26.7L47.5,27.7L48.0,28.6L48.5,29.3L49.0,29.9L49.5,30.4L50.0,30.8L50.5,31.0L51.0,31.0L51.5,30.9L52.0,30.6L52.5,30.2L53.0,29.7L53.5,29.0L54.0,28.2L54.5,27.3L55.0,26.3L55.5,25.2L56.0,24.0L56.5,22.8L57.0,21.5L57.5,20.2L58.0,18.8L58.5,17.5" stroke="#2b86c9" stroke-width="1.3" fill="none" stroke-linejoin="round"/></svg><span>plot</span></div>
<div class="btn" style="left:574px;top:593px;transform:translateX(0px);"><svg style="position:absolute;left:2px;top:2px" width="60" height="40" viewBox="0 0 60 40"><rect x="0.5" y="0.5" width="59" height="39" fill="#fff" stroke="#9c9c9c"/><path d="M9.5,1V39M28.5,1V39M37.5,1V39M43.5,1V39M47.5,1V39M51,1V39M53.5,1V39M55.5,1V39M57.5,1V39" stroke="#b9b9b9" stroke-width="1" fill="none"/><path d="M0.5,0V39.5H60" stroke="#1e1e1e" stroke-width="1" fill="none"/><path d="M1,6.3h2.5M1,13.3h2.5M1,20.4h2.5M1,27.4h2.5M1,34.5h2.5" stroke="#2a2a2a" stroke-width="1" fill="none"/><path d="M0.8,11.8 C3,9.5 6,8.7 9,8.9 C18,9.5 26,29.3 34.7,29.3 C40,29.3 43,7 46.1,7 C49,7 51,28.7 53.7,28.7 C55.3,28.7 56,22 57,17.8" stroke="#2b86c9" stroke-width="1.3" fill="none"/></svg><span>semilogx</span></div>
<div class="btn" style="left:644px;top:593px;transform:translateX(-0.3px);"><svg style="position:absolute;left:2px;top:2px" width="60" height="40" viewBox="0 0 60 40"><rect x="0.5" y="0.5" width="59" height="39" fill="#fff" stroke="#9c9c9c"/><path d="M1,1.5H59M1,3.5H59M1,6.5H59M1,9.5H59M1,15.5H59M1,24.5H59" stroke="#b9b9b9" stroke-width="1" fill="none"/><path d="M0.5,0V39.5H60" stroke="#1e1e1e" stroke-width="1" fill="none"/><path d="M5.4,39v-2.5M13.4,39v-2.5M21.4,39v-2.5M29.4,39v-2.5M37.4,39v-2.5M45.4,39v-2.5M53.4,39v-2.5" stroke="#2a2a2a" stroke-width="1" fill="none"/><path d="M0.8,7.5 C2.5,4 4.5,2.6 6.8,2.6 C13.5,2.6 19.3,21 21,31.4 C22.7,21 28.7,2.6 35.4,2.6 C42.1,2.6 48.1,21 49.8,31.4 C51.3,22 54.5,13 57.7,8.9" stroke="#2b86c9" stroke-width="1.3" fill="none"/></svg><span>semilogy</span></div>
<div class="btn" style="left:714px;top:593px;transform:translateX(-0.6px);"><svg style="position:absolute;left:2px;top:2px" width="60" height="40" viewBox="0 0 60 40"><rect x="0.5" y="0.5" width="59" height="39" fill="#fff" stroke="#9c9c9c"/><path d="M9.5,1V39M28.5,1V39M37.5,1V39M43.5,1V39M47.5,1V39M51,1V39M53.5,1V39M55.5,1V39M57.5,1V39" stroke="#b9b9b9" stroke-width="1" fill="none"/><path d="M1,1.5H59M1,3.5H59M1,6.5H59M1,9.5H59M1,15.5H59M1,24.5H59" stroke="#b9b9b9" stroke-width="1" fill="none"/><path d="M0.5,0V39.5H60" stroke="#1e1e1e" stroke-width="1" fill="none"/><path d="M0.8,2.6 L15,2.6 C26,2.6 33.6,22 35.2,31.4 C36.8,22 42,2.6 46.1,2.6 C50,2.6 52.8,22 53.7,31.4 C54.6,23 56.3,14 57.8,8.9" stroke="#2b86c9" stroke-width="1.3" fill="none"/></svg><span>loglog</span></div>
<div class="hl" style="left:489.5px;top:666px;width:303.5px;"></div>
<div class="abs" style="left:470px;top:672px;width:340px;height:24px;background:#e4e4e4;border-top:1px solid #c6c6c6;box-sizing:border-box;"></div>
<svg class="abs" style="left:793px;top:679.5px" width="12" height="11" viewBox="0 0 12 11" ><polygon points="1,0.5 1,10.5 7,5.5" fill="#9e9e9e"/><rect x="8.2" y="0.5" width="2" height="10" fill="#9e9e9e"/></svg>
<svg class="abs" style="left:0;top:145px" width="468" height="528" viewBox="0 145 468 528"><path d="M33.5,233.5v-3.8M33.5,175.5v3.8M71.5,233.5v-3.8M71.5,175.5v3.8M110.5,233.5v-3.8M110.5,175.5v3.8M148.5,233.5v-3.8M148.5,175.5v3.8M187.5,233.5v-3.8M187.5,175.5v3.8M225.5,233.5v-3.8M225.5,175.5v3.8M264.5,233.5v-3.8M264.5,175.5v3.8M303.5,233.5v-3.8M303.5,175.5v3.8M341.5,233.5v-3.8M341.5,175.5v3.8M380.5,233.5v-3.8M380.5,175.5v3.8M418.5,233.5v-3.8M418.5,175.5v3.8" stroke="#262626" stroke-width="1" fill="none"/><rect x="26.5" y="175.5" width="425.0" height="58.0" fill="none" stroke="#262626" stroke-width="1"/><text x="33.15" y="247.3" font-family="Liberation Sans, sans-serif" font-size="10" fill="#3f3f3f" text-anchor="middle">-7</text><text x="71.70" y="247.3" font-family="Liberation Sans, sans-serif" font-size="10" fill="#3f3f3f" text-anchor="middle">-6</text><text x="110.25" y="247.3" font-family="Liberation Sans, sans-serif" font-size="10" fill="#3f3f3f" text-anchor="middle">-5</text><text x="148.80" y="247.3" font-family="Liberation Sans, sans-serif" font-size="10" fill="#3f3f3f" text-anchor="middle">-4</text><text x="187.35" y="247.3" font-family="Liberation Sans, sans-serif" font-size="10" fill="#3f3f3f" text-anchor="middle">-3</text><text x="225.90" y="247.3" font-family="Liberation Sans, sans-serif" font-size="10" fill="#3f3f3f" text-anchor="middle">-2</text><text x="264.45" y="247.3" font-family="Liberation Sans, sans-serif" font-size="10" fill="#3f3f3f" text-anchor="middle">-1</text><text x="303.00" y="247.3" font-family="Liberation Sans, sans-serif" font-size="10" fill="#3f3f3f" text-anchor="middle">0</text><text x="341.55" y="247.3" font-family="Liberation Sans, sans-serif" font-size="10" fill="#3f3f3f" text-anchor="middle">1</text><text x="380.10" y="247.3" font-family="Liberation Sans, sans-serif" font-size="10" fill="#3f3f3f" text-anchor="middle">2</text><text x="418.65" y="247.3" font-family="Liberation Sans, sans-serif" font-size="10" fill="#3f3f3f" text-anchor="middle">3</text><path d="M84.5,316.5v-3.8M84.5,258.5v3.8M153.5,316.5v-3.8M153.5,258.5v3.8M222.5,316.5v-3.8M222.5,258.5v3.8M290.5,316.5v-3.8M290.5,258.5v3.8M359.5,316.5v-3.8M359.5,258.5v3.8M428.5,316.5v-3.8M428.5,258.5v3.8" stroke="#262626" stroke-width="1" fill="none"/><rect x="26.5" y="258.5" width="425.0" height="58.0" fill="none" stroke="#262626" stroke-width="1"/><text x="84.60" y="330.3" font-family="Liberation Sans, sans-serif" font-size="10" fill="#3f3f3f" text-anchor="middle">-6</text><text x="153.30" y="330.3" font-family="Liberation Sans, sans-serif" font-size="10" fill="#3f3f3f" text-anchor="middle">-4</text><text x="222.00" y="330.3" font-family="Liberation Sans, sans-serif" font-size="10" fill="#3f3f3f" text-anchor="middle">-2</text><text x="290.70" y="330.3" font-family="Liberation Sans, sans-serif" font-size="10" fill="#3f3f3f" text-anchor="middle">0</text><text x="359.40" y="330.3" font-family="Liberation Sans, sans-serif" font-size="10" fill="#3f3f3f" text-anchor="middle">2</text><text x="428.10" y="330.3" font-family="Liberation Sans, sans-serif" font-size="10" fill="#3f3f3f" text-anchor="middle">4</text><path d="M80.5,399.5v-3.8M80.5,341.5v3.8M143.5,399.5v-3.8M143.5,341.5v3.8M207.5,399.5v-3.8M207.5,341.5v3.8M271.5,399.5v-3.8M271.5,341.5v3.8M335.5,399.5v-3.8M335.5,341.5v3.8M399.5,399.5v-3.8M399.5,341.5v3.8" stroke="#262626" stroke-width="1" fill="none"/><rect x="26.5" y="341.5" width="425.0" height="58.0" fill="none" stroke="#262626" stroke-width="1"/><text x="80.00" y="413.3" font-family="Liberation Sans, sans-serif" font-size="10" fill="#3f3f3f" text-anchor="middle">-0.6</text><text x="143.90" y="413.3" font-family="Liberation Sans, sans-serif" font-size="10" fill="#3f3f3f" text-anchor="middle">-0.4</text><text x="207.80" y="413.3" font-family="Liberation Sans, sans-serif" font-size="10" fill="#3f3f3f" text-anchor="middle">-0.2</text><text x="271.70" y="413.3" font-family="Liberation Sans, sans-serif" font-size="10" fill="#3f3f3f" text-anchor="middle">0</text><text x="335.60" y="413.3" font-family="Liberation Sans, sans-serif" font-size="10" fill="#3f3f3f" text-anchor="middle">0.2</text><text x="399.50" y="413.3" font-family="Liberation Sans, sans-serif" font-size="10" fill="#3f3f3f" text-anchor="middle">0.4</text><path d="M26.5,482.5v-3.8M26.5,424.5v3.8M79.5,482.5v-3.8M79.5,424.5v3.8M132.5,482.5v-3.8M132.5,424.5v3.8M186.5,482.5v-3.8M186.5,424.5v3.8M239.5,482.5v-3.8M239.5,424.5v3.8M292.5,482.5v-3.8M292.5,424.5v3.8M345.5,482.5v-3.8M345.5,424.5v3.8M398.5,482.5v-3.8M398.5,424.5v3.8M451.5,482.5v-3.8M451.5,424.5v3.8" stroke="#262626" stroke-width="1" fill="none"/><rect x="26.5" y="424.5" width="425.0" height="58.0" fill="none" stroke="#262626" stroke-width="1"/><text x="26.49" y="496.3" font-family="Liberation Sans, sans-serif" font-size="10" fill="#3f3f3f" text-anchor="middle">-4</text><text x="79.68" y="496.3" font-family="Liberation Sans, sans-serif" font-size="10" fill="#3f3f3f" text-anchor="middle">-3</text><text x="132.87" y="496.3" font-family="Liberation Sans, sans-serif" font-size="10" fill="#3f3f3f" text-anchor="middle">-2</text><text x="186.06" y="496.3" font-family="Liberation Sans, sans-serif" font-size="10" fill="#3f3f3f" text-anchor="middle">-1</text><text x="239.25" y="496.3" font-family="Liberation Sans, sans-serif" font-size="10" fill="#3f3f3f" text-anchor="middle">0</text><text x="292.44" y="496.3" font-family="Liberation Sans, sans-serif" font-size="10" fill="#3f3f3f" text-anchor="middle">1</text><text x="345.63" y="496.3" font-family="Liberation Sans, sans-serif" font-size="10" fill="#3f3f3f" text-anchor="middle">2</text><text x="398.82" y="496.3" font-family="Liberation Sans, sans-serif" font-size="10" fill="#3f3f3f" text-anchor="middle">3</text><text x="452.01" y="496.3" font-family="Liberation Sans, sans-serif" font-size="10" fill="#3f3f3f" text-anchor="middle">4</text><path d="M42.5,565.5v-3.8M42.5,507.5v3.8M91.5,565.5v-3.8M91.5,507.5v3.8M139.5,565.5v-3.8M139.5,507.5v3.8M188.5,565.5v-3.8M188.5,507.5v3.8M237.5,565.5v-3.8M237.5,507.5v3.8M285.5,565.5v-3.8M285.5,507.5v3.8M334.5,565.5v-3.8M334.5,507.5v3.8M382.5,565.5v-3.8M382.5,507.5v3.8M431.5,565.5v-3.8M431.5,507.5v3.8" stroke="#262626" stroke-width="1" fill="none"/><rect x="26.5" y="507.5" width="425.0" height="58.0" fill="none" stroke="#262626" stroke-width="1"/><text x="42.60" y="579.3" font-family="Liberation Sans, sans-serif" font-size="10" fill="#3f3f3f" text-anchor="middle">-0.8</text><text x="91.20" y="579.3" font-family="Liberation Sans, sans-serif" font-size="10" fill="#3f3f3f" text-anchor="middle">-0.6</text><text x="139.80" y="579.3" font-family="Liberation Sans, sans-serif" font-size="10" fill="#3f3f3f" text-anchor="middle">-0.4</text><text x="188.40" y="579.3" font-family="Liberation Sans, sans-serif" font-size="10" fill="#3f3f3f" text-anchor="middle">-0.2</text><text x="237.00" y="579.3" font-family="Liberation Sans, sans-serif" font-size="10" fill="#3f3f3f" text-anchor="middle">0</text><text x="285.60" y="579.3" font-family="Liberation Sans, sans-serif" font-size="10" fill="#3f3f3f" text-anchor="middle">0.2</text><text x="334.20" y="579.3" font-family="Liberation Sans, sans-serif" font-size="10" fill="#3f3f3f" text-anchor="middle">0.4</text><text x="382.80" y="579.3" font-family="Liberation Sans, sans-serif" font-size="10" fill="#3f3f3f" text-anchor="middle">0.6</text><text x="431.40" y="579.3" font-family="Liberation Sans, sans-serif" font-size="10" fill="#3f3f3f" text-anchor="middle">0.8</text><path d="M26.5,648.5v-3.8M26.5,590.5v3.8M79.5,648.5v-3.8M79.5,590.5v3.8M132.5,648.5v-3.8M132.5,590.5v3.8M186.5,648.5v-3.8M186.5,590.5v3.8M239.5,648.5v-3.8M239.5,590.5v3.8M292.5,648.5v-3.8M292.5,590.5v3.8M345.5,648.5v-3.8M345.5,590.5v3.8M398.5,648.5v-3.8M398.5,590.5v3.8M451.5,648.5v-3.8M451.5,590.5v3.8" stroke="#262626" stroke-width="1" fill="none"/><rect x="26.5" y="590.5" width="425.0" height="58.0" fill="none" stroke="#262626" stroke-width="1"/><text x="26.49" y="662.3" font-family="Liberation Sans, sans-serif" font-size="10" fill="#3f3f3f" text-anchor="middle">-4</text><text x="79.68" y="662.3" font-family="Liberation Sans, sans-serif" font-size="10" fill="#3f3f3f" text-anchor="middle">-3</text><text x="132.87" y="662.3" font-family="Liberation Sans, sans-serif" font-size="10" fill="#3f3f3f" text-anchor="middle">-2</text><text x="186.06" y="662.3" font-family="Liberation Sans, sans-serif" font-size="10" fill="#3f3f3f" text-anchor="middle">-1</text><text x="239.25" y="662.3" font-family="Liberation Sans, sans-serif" font-size="10" fill="#3f3f3f" text-anchor="middle">0</text><text x="292.44" y="662.3" font-family="Liberation Sans, sans-serif" font-size="10" fill="#3f3f3f" text-anchor="middle">1</text><text x="345.63" y="662.3" font-family="Liberation Sans, sans-serif" font-size="10" fill="#3f3f3f" text-anchor="middle">2</text><text x="398.82" y="662.3" font-family="Liberation Sans, sans-serif" font-size="10" fill="#3f3f3f" text-anchor="middle">3</text><text x="452.01" y="662.3" font-family="Liberation Sans, sans-serif" font-size="10" fill="#3f3f3f" text-anchor="middle">4</text><text x="239.8" y="169.5" font-family="Liberation Sans, sans-serif" font-size="11.65" font-weight="bold" fill="#262626" text-anchor="middle">Individual Residuals</text><text transform="translate(21.0,203.3) rotate(-90)" font-family="Liberation Sans, sans-serif" font-size="11.8" fill="#333" text-anchor="middle">CentralConc</text><path d="M296.3,233.4L308.1,175.5" stroke="#f51414" stroke-width="1.25" stroke-dasharray="9 2.5 2.5 2.5" fill="none"/><path d="M32.1,231.2h8.2M36.2,227.1v8.2M168.1,226.7h8.2M172.2,222.6v8.2M183.2,223.3h8.2M187.3,219.2v8.2M218.1,221.6h8.2M222.2,217.5v8.2M218.7,220.4h8.2M222.8,216.3v8.2M262.0,219.4h8.2M266.1,215.3v8.2M268.1,218.0h8.2M272.2,213.9v8.2M288.6,216.8h8.2M292.7,212.7v8.2M290.6,215.8h8.2M294.7,211.7v8.2M292.5,215.2h8.2M296.6,211.1v8.2M304.1,192.0h8.2M308.2,187.9v8.2M308.1,191.3h8.2M312.2,187.2v8.2M318.0,189.8h8.2M322.1,185.7v8.2M320.0,189.4h8.2M324.1,185.3v8.2M349.8,188.4h8.2M353.9,184.3v8.2M354.6,186.2h8.2M358.7,182.1v8.2M359.5,182.2h8.2M363.6,178.1v8.2M437.7,177.5h8.2M441.8,173.4v8.2M295.4,215.3h8.2M299.6,211.2v8.2M296.3,214.9h8.2M300.4,210.8v8.2M295.8,214.6h8.2M299.9,210.5v8.2M296.7,214.2h8.2M300.8,210.1v8.2M296.2,213.8h8.2M300.3,209.7v8.2M297.1,213.5h8.2M301.2,209.4v8.2M296.6,213.1h8.2M300.7,209.0v8.2M297.5,212.8h8.2M301.6,208.7v8.2M297.0,212.4h8.2M301.1,208.3v8.2M297.9,212.0h8.2M302.0,207.9v8.2M297.4,211.7h8.2M301.5,207.6v8.2M298.3,211.3h8.2M302.4,207.2v8.2M297.8,210.9h8.2M301.9,206.8v8.2M298.7,210.6h8.2M302.8,206.5v8.2M298.2,210.2h8.2M302.3,206.1v8.2M299.1,209.8h8.2M303.2,205.7v8.2M298.6,209.5h8.2M302.7,205.4v8.2M299.5,209.1h8.2M303.6,205.0v8.2M298.8,208.8h8.2M302.9,204.7v8.2M299.6,208.4h8.2M303.7,204.3v8.2M298.8,208.0h8.2M302.9,203.9v8.2M299.6,207.7h8.2M303.7,203.6v8.2M298.8,207.3h8.2M302.9,203.2v8.2M299.6,206.9h8.2M303.7,202.8v8.2M298.8,206.6h8.2M302.9,202.5v8.2M299.6,206.2h8.2M303.7,202.1v8.2M298.8,205.8h8.2M302.9,201.7v8.2M299.6,205.5h8.2M303.7,201.4v8.2M298.8,205.1h8.2M302.9,201.0v8.2M299.6,204.8h8.2M303.7,200.7v8.2M298.8,204.4h8.2M302.9,200.3v8.2M299.6,204.0h8.2M303.7,199.9v8.2M298.8,203.7h8.2M302.9,199.6v8.2M299.6,203.3h8.2M303.7,199.2v8.2M298.8,202.9h8.2M302.9,198.8v8.2M299.6,202.6h8.2M303.7,198.5v8.2M298.8,202.2h8.2M302.9,198.1v8.2M299.6,201.8h8.2M303.7,197.7v8.2M298.8,201.5h8.2M302.9,197.4v8.2M299.6,201.1h8.2M303.7,197.0v8.2M298.8,200.7h8.2M302.9,196.6v8.2M299.6,200.4h8.2M303.7,196.3v8.2M298.8,200.0h8.2M302.9,195.9v8.2M299.6,199.7h8.2M303.7,195.6v8.2M298.8,199.3h8.2M302.9,195.2v8.2M299.6,198.9h8.2M303.7,194.8v8.2M298.8,198.6h8.2M302.9,194.5v8.2M299.6,198.2h8.2M303.7,194.1v8.2M298.8,197.8h8.2M302.9,193.7v8.2M299.6,197.5h8.2M303.7,193.4v8.2M298.8,197.1h8.2M302.9,193.0v8.2M299.6,196.7h8.2M303.7,192.6v8.2M298.8,196.4h8.2M302.9,192.3v8.2M299.6,196.0h8.2M303.7,191.9v8.2M298.9,195.7h8.2M303.0,191.6v8.2M299.7,195.3h8.2M303.8,191.2v8.2M299.2,194.9h8.2M303.3,190.8v8.2M300.0,194.6h8.2M304.1,190.5v8.2M299.5,194.2h8.2M303.6,190.1v8.2M300.3,193.8h8.2M304.4,189.7v8.2M299.7,193.5h8.2M303.8,189.4v8.2M300.6,193.1h8.2M304.7,189.0v8.2M300.0,192.7h8.2M304.1,188.6v8.2M300.9,192.4h8.2M305.0,188.3v8.2M300.3,192.0h8.2M304.4,187.9v8.2M301.2,191.7h8.2M305.3,187.6v8.2M300.6,191.3h8.2M304.7,187.2v8.2M301.5,190.9h8.2M305.6,186.8v8.2M300.9,190.6h8.2M305.0,186.5v8.2M301.8,190.2h8.2M305.9,186.1v8.2" stroke="#0000ff" stroke-width="1.15" fill="none"/><rect x="53.7" y="314.4" width="27.5" height="2.1" fill="#0f74bd" stroke="#0a0a0a" stroke-width="1"/><rect x="156.7" y="312.3" width="27.5" height="4.2" fill="#0f74bd" stroke="#0a0a0a" stroke-width="1"/><rect x="191.1" y="312.3" width="27.5" height="4.2" fill="#0f74bd" stroke="#0a0a0a" stroke-width="1"/><rect x="259.8" y="260.5" width="27.5" height="56.0" fill="#0f74bd" stroke="#0a0a0a" stroke-width="1"/><rect x="294.1" y="273.2" width="27.5" height="43.3" fill="#0f74bd" stroke="#0a0a0a" stroke-width="1"/><rect x="328.5" y="308.5" width="27.5" height="8.0" fill="#0f74bd" stroke="#0a0a0a" stroke-width="1"/><rect x="397.2" y="314.4" width="27.5" height="2.1" fill="#0f74bd" stroke="#0a0a0a" stroke-width="1"/><path d="M153.3,316.48L156.7,316.48L160.2,316.47L163.6,316.45L167.0,316.43L170.5,316.40L173.9,316.35L177.3,316.29L180.8,316.21L184.2,316.11L187.6,315.97L191.1,315.79L194.5,315.55L198.0,315.25L201.4,314.88L204.8,314.40L208.3,313.82L211.7,313.11L215.1,312.26L218.6,311.24L222.0,310.04L225.4,308.65L228.9,307.06L232.3,305.25L235.7,303.24L239.2,301.01L242.6,298.60L246.0,296.01L249.5,293.28L252.9,290.45L256.3,287.57L259.8,284.69L263.2,281.86L266.7,279.16L270.1,276.66L273.5,274.40L277.0,272.47L280.4,270.90L283.8,269.74L287.3,269.04L290.7,268.80L294.1,269.04L297.6,269.74L301.0,270.90L304.4,272.47L307.9,274.40L311.3,276.66L314.7,279.16L318.2,281.86L321.6,284.69L325.1,287.57L328.5,290.45L331.9,293.28L335.4,296.01L338.8,298.60L342.2,301.01L345.7,303.24L349.1,305.25L352.5,307.06L356.0,308.65L359.4,310.04L362.8,311.24L366.3,312.26L369.7,313.11L373.1,313.82L376.6,314.40L380.0,314.88L383.4,315.25L386.9,315.55L390.3,315.79L393.8,315.97L397.2,316.11L400.6,316.21L404.1,316.29L407.5,316.35L410.9,316.40L414.4,316.43L417.8,316.45L421.2,316.47L424.7,316.48L428.1,316.48" stroke="#f21a1a" stroke-width="1.1" fill="none"/><text transform="translate(21.0,370.1) rotate(-90)" font-family="Liberation Sans, sans-serif" font-size="11.8" fill="#333" text-anchor="middle">PeripheralConc</text><path d="M229,399.4L298,341.5" stroke="#f51414" stroke-width="1.25" stroke-dasharray="9 2.5 2.5 2.5" fill="none"/><path d="M32.0,397.3h8.2M36.1,393.2v8.2M147.9,392.5h8.2M152.0,388.4v8.2M178.1,389.3h8.2M182.2,385.2v8.2M195.0,387.2h8.2M199.1,383.1v8.2M198.9,387.2h8.2M203.0,383.1v8.2M206.9,385.7h8.2M211.0,381.6v8.2M214.3,383.9h8.2M218.4,379.8v8.2M218.1,383.9h8.2M222.2,379.8v8.2M230.5,381.6h8.2M234.6,377.5v8.2M232.7,381.2h8.2M236.8,377.1v8.2M241.9,379.6h8.2M246.0,375.5v8.2M243.9,379.3h8.2M248.0,375.2v8.2M248.1,377.9h8.2M252.2,373.8v8.2M253.0,376.6h8.2M257.1,372.5v8.2M269.7,360.8h8.2M273.8,356.7v8.2M280.3,361.0h8.2M284.4,356.9v8.2M282.3,360.8h8.2M286.4,356.7v8.2M284.5,360.0h8.2M288.6,355.9v8.2M286.9,358.5h8.2M291.0,354.4v8.2M296.8,357.4h8.2M300.9,353.3v8.2M305.1,357.4h8.2M309.2,353.3v8.2M328.7,355.2h8.2M332.8,351.1v8.2M333.2,354.3h8.2M337.3,350.2v8.2M345.9,353.7h8.2M350.0,349.6v8.2M361.6,351.6h8.2M365.7,347.5v8.2M371.1,348.4h8.2M375.2,344.3v8.2M437.8,343.6h8.2M441.9,339.5v8.2M258.7,377.5h8.2M262.8,373.4v8.2M260.0,377.3h8.2M264.1,373.2v8.2M259.3,377.0h8.2M263.4,372.9v8.2M260.6,376.8h8.2M264.7,372.7v8.2M259.9,376.6h8.2M264.0,372.5v8.2M261.2,376.4h8.2M265.3,372.3v8.2M260.5,376.1h8.2M264.6,372.0v8.2M261.8,375.9h8.2M265.9,371.8v8.2M261.1,375.7h8.2M265.2,371.6v8.2M262.4,375.5h8.2M266.5,371.4v8.2M261.7,375.2h8.2M265.8,371.1v8.2M262.9,374.9h8.2M267.0,370.8v8.2M262.2,374.6h8.2M266.3,370.5v8.2M263.4,374.3h8.2M267.5,370.2v8.2M262.6,374.0h8.2M266.7,369.9v8.2M263.9,373.7h8.2M268.0,369.6v8.2M263.1,373.4h8.2M267.2,369.3v8.2M264.4,373.1h8.2M268.5,369.0v8.2M263.6,372.8h8.2M267.7,368.7v8.2M264.9,372.5h8.2M269.0,368.4v8.2M264.0,372.2h8.2M268.1,368.1v8.2M265.2,371.9h8.2M269.3,367.8v8.2M264.4,371.5h8.2M268.5,367.4v8.2M265.6,371.2h8.2M269.7,367.1v8.2M264.7,370.9h8.2M268.8,366.8v8.2M265.9,370.5h8.2M270.0,366.4v8.2M265.1,370.2h8.2M269.2,366.1v8.2M266.3,369.9h8.2M270.4,365.8v8.2M265.4,369.5h8.2M269.5,365.4v8.2M266.6,369.2h8.2M270.7,365.1v8.2M265.8,368.8h8.2M269.9,364.7v8.2M266.9,368.5h8.2M271.0,364.4v8.2M266.0,368.1h8.2M270.1,364.0v8.2M267.2,367.8h8.2M271.3,363.7v8.2M266.3,367.4h8.2M270.4,363.3v8.2M267.4,367.1h8.2M271.5,363.0v8.2M266.5,366.7h8.2M270.6,362.6v8.2M267.7,366.3h8.2M271.8,362.2v8.2M266.8,366.0h8.2M270.9,361.9v8.2M267.9,365.6h8.2M272.0,361.5v8.2M267.0,365.3h8.2M271.1,361.2v8.2M268.1,364.9h8.2M272.2,360.8v8.2M267.2,364.5h8.2M271.3,360.4v8.2M268.3,364.2h8.2M272.4,360.1v8.2M267.4,363.8h8.2M271.5,359.7v8.2M268.5,363.4h8.2M272.6,359.3v8.2M267.6,363.1h8.2M271.7,359.0v8.2M268.7,362.7h8.2M272.8,358.6v8.2" stroke="#0000ff" stroke-width="1.15" fill="none"/><rect x="197.9" y="481.5" width="8.3" height="1.0" fill="#0f74bd" stroke="#0a0a0a" stroke-width="1"/><rect x="219.1" y="476.5" width="8.3" height="6.0" fill="#0f74bd" stroke="#0a0a0a" stroke-width="1"/><rect x="229.8" y="426.2" width="8.3" height="56.3" fill="#0f74bd" stroke="#0a0a0a" stroke-width="1"/><rect x="240.4" y="463.9" width="8.3" height="18.6" fill="#0f74bd" stroke="#0a0a0a" stroke-width="1"/><rect x="251.1" y="476.5" width="8.3" height="6.0" fill="#0f74bd" stroke="#0a0a0a" stroke-width="1"/><rect x="261.7" y="481.5" width="8.3" height="1.0" fill="#0f74bd" stroke="#0a0a0a" stroke-width="1"/><path d="M26.5,482.50L31.8,482.50L37.1,482.49L42.4,482.49L47.8,482.49L53.1,482.48L58.4,482.48L63.7,482.47L69.0,482.46L74.4,482.44L79.7,482.42L85.0,482.39L90.3,482.35L95.6,482.31L101.0,482.25L106.3,482.17L111.6,482.08L116.9,481.97L122.2,481.84L127.6,481.68L132.9,481.50L138.2,481.28L143.5,481.04L148.8,480.76L154.1,480.44L159.5,480.10L164.8,479.72L170.1,479.32L175.4,478.90L180.7,478.46L186.1,478.01L191.4,477.56L196.7,477.13L202.0,476.71L207.3,476.32L212.7,475.97L218.0,475.67L223.3,475.43L228.6,475.25L233.9,475.14L239.2,475.10L244.6,475.14L249.9,475.25L255.2,475.43L260.5,475.67L265.8,475.97L271.2,476.32L276.5,476.71L281.8,477.13L287.1,477.56L292.4,478.01L297.8,478.46L303.1,478.90L308.4,479.32L313.7,479.72L319.0,480.10L324.4,480.44L329.7,480.76L335.0,481.04L340.3,481.28L345.6,481.50L350.9,481.68L356.3,481.84L361.6,481.97L366.9,482.08L372.2,482.17L377.5,482.25L382.9,482.31L388.2,482.35L393.5,482.39L398.8,482.42L404.1,482.44L409.5,482.46L414.8,482.47L420.1,482.48L425.4,482.48L430.7,482.49L436.1,482.49L441.4,482.49L446.7,482.50L452.0,482.50" stroke="#f21a1a" stroke-width="1.1" fill="none"/><text transform="translate(21.0,536.1) rotate(-90)" font-family="Liberation Sans, sans-serif" font-size="11.8" fill="#333" text-anchor="middle">TumorWeight</text><path d="M99.3,565.4L362,507.6" stroke="#f51414" stroke-width="1.25" stroke-dasharray="9 2.5 2.5 2.5" fill="none"/><path d="M32.0,559.0h8.2M36.1,554.9v8.2M32.0,563.5h8.2M36.1,559.4v8.2M101.1,556.7h8.2M105.2,552.6v8.2M109.1,555.7h8.2M113.2,551.6v8.2M109.8,555.2h8.2M113.9,551.1v8.2M131.6,554.0h8.2M135.7,549.9v8.2M134.6,554.0h8.2M138.7,549.9v8.2M147.0,551.6h8.2M151.1,547.5v8.2M150.6,551.0h8.2M154.7,546.9v8.2M296.1,522.6h8.2M300.2,518.5v8.2M305.3,522.6h8.2M309.4,518.5v8.2M310.3,521.7h8.2M314.4,517.6v8.2M313.3,521.7h8.2M317.4,517.6v8.2M323.7,519.6h8.2M327.8,515.5v8.2M331.1,519.6h8.2M335.2,515.5v8.2M342.3,518.1h8.2M346.4,514.0v8.2M345.0,518.1h8.2M349.1,514.0v8.2M352.4,516.0h8.2M356.5,511.9v8.2M359.2,515.2h8.2M363.3,511.1v8.2M414.9,513.7h8.2M419.0,509.6v8.2M437.8,509.6h8.2M441.9,505.5v8.2M155.6,549.3h8.2M159.7,545.2v8.2M156.9,549.2h8.2M161.0,545.1v8.2M158.4,548.6h8.2M162.5,544.5v8.2M158.9,548.9h8.2M163.0,544.8v8.2M160.4,548.3h8.2M164.5,544.2v8.2M162.4,548.2h8.2M166.5,544.1v8.2M163.4,548.0h8.2M167.5,543.9v8.2M164.4,547.6h8.2M168.5,543.5v8.2M165.6,547.8h8.2M169.7,543.7v8.2M166.6,547.5h8.2M170.7,543.4v8.2M168.0,546.9h8.2M172.1,542.8v8.2M169.3,547.0h8.2M173.4,542.9v8.2M169.9,546.5h8.2M174.0,542.4v8.2M171.8,546.5h8.2M175.9,542.4v8.2M172.8,546.6h8.2M176.9,542.5v8.2M174.0,546.4h8.2M178.1,542.3v8.2M174.8,546.1h8.2M178.9,542.0v8.2M176.0,546.0h8.2M180.1,541.9v8.2M177.7,545.2h8.2M181.8,541.1v8.2M178.0,545.1h8.2M182.1,541.0v8.2M180.2,545.0h8.2M184.3,540.9v8.2M181.0,544.7h8.2M185.1,540.6v8.2M182.0,544.6h8.2M186.1,540.5v8.2M183.0,544.5h8.2M187.1,540.4v8.2M184.5,544.4h8.2M188.6,540.3v8.2M185.8,544.2h8.2M189.9,540.1v8.2M187.2,544.0h8.2M191.3,539.9v8.2M188.1,543.3h8.2M192.2,539.2v8.2M189.5,543.6h8.2M193.6,539.5v8.2M190.8,543.1h8.2M194.9,539.0v8.2M191.7,542.7h8.2M195.8,538.6v8.2M193.1,542.7h8.2M197.2,538.6v8.2M193.6,542.2h8.2M197.7,538.1v8.2M195.5,542.5h8.2M199.6,538.4v8.2M195.7,542.1h8.2M199.8,538.0v8.2M197.3,541.5h8.2M201.4,537.4v8.2M198.4,541.7h8.2M202.5,537.6v8.2M200.2,541.0h8.2M204.3,536.9v8.2M201.1,540.8h8.2M205.2,536.7v8.2M202.4,540.7h8.2M206.5,536.6v8.2M203.8,540.9h8.2M207.9,536.8v8.2M204.5,540.7h8.2M208.6,536.6v8.2M205.5,539.9h8.2M209.6,535.8v8.2M207.0,539.6h8.2M211.1,535.5v8.2M207.7,539.6h8.2M211.8,535.5v8.2M209.4,539.2h8.2M213.5,535.1v8.2M209.9,539.4h8.2M214.0,535.3v8.2M211.4,539.2h8.2M215.5,535.1v8.2M213.3,538.6h8.2M217.4,534.5v8.2M214.0,538.5h8.2M218.1,534.4v8.2M215.4,538.3h8.2M219.5,534.2v8.2M216.5,538.1h8.2M220.6,534.0v8.2M218.1,537.8h8.2M222.2,533.7v8.2M218.7,537.6h8.2M222.8,533.5v8.2M219.6,537.2h8.2M223.7,533.1v8.2M221.7,537.0h8.2M225.8,532.9v8.2M222.4,536.5h8.2M226.5,532.4v8.2M223.4,536.6h8.2M227.5,532.5v8.2M224.1,536.4h8.2M228.2,532.3v8.2M226.0,535.8h8.2M230.1,531.7v8.2M227.2,535.8h8.2M231.3,531.7v8.2M228.5,535.4h8.2M232.6,531.3v8.2M229.7,535.4h8.2M233.8,531.3v8.2M230.1,534.8h8.2M234.2,530.7v8.2M232.0,535.1h8.2M236.1,531.0v8.2M232.7,534.5h8.2M236.8,530.4v8.2M234.3,534.2h8.2M238.4,530.1v8.2M235.2,533.9h8.2M239.3,529.8v8.2M236.4,533.8h8.2M240.5,529.7v8.2M237.5,533.4h8.2M241.6,529.3v8.2M239.3,533.0h8.2M243.4,528.9v8.2M240.2,533.1h8.2M244.3,529.0v8.2M241.1,532.5h8.2M245.2,528.4v8.2M242.9,532.3h8.2M247.0,528.2v8.2M243.3,532.1h8.2M247.4,528.0v8.2M245.1,531.7h8.2M249.2,527.6v8.2M245.8,531.6h8.2M249.9,527.5v8.2M247.6,531.4h8.2M251.7,527.3v8.2M248.9,530.9h8.2M253.0,526.8v8.2M249.4,531.0h8.2M253.5,526.9v8.2M251.3,530.6h8.2M255.4,526.5v8.2M251.7,530.1h8.2M255.8,526.0v8.2M253.2,529.9h8.2M257.3,525.8v8.2M254.7,530.0h8.2M258.8,525.9v8.2M255.2,529.4h8.2M259.3,525.3v8.2M257.1,529.3h8.2M261.2,525.2v8.2M258.3,528.9h8.2M262.4,524.8v8.2M258.7,528.6h8.2M262.8,524.5v8.2M260.6,528.3h8.2M264.7,524.2v8.2M261.3,528.1h8.2M265.4,524.0v8.2M262.6,527.8h8.2M266.7,523.7v8.2M264.4,527.4h8.2M268.5,523.3v8.2M264.4,527.6h8.2M268.5,523.5v8.2M266.7,527.3h8.2M270.8,523.2v8.2M267.3,527.0h8.2M271.4,522.9v8.2M269.1,526.3h8.2M273.2,522.2v8.2M270.1,526.4h8.2M274.2,522.3v8.2M271.2,526.0h8.2M275.3,521.9v8.2M271.9,525.6h8.2M276.0,521.5v8.2M273.0,525.1h8.2M277.1,521.0v8.2M274.6,525.0h8.2M278.7,520.9v8.2M276.1,524.6h8.2M280.2,520.5v8.2M277.4,524.7h8.2M281.5,520.6v8.2M278.6,524.5h8.2M282.7,520.4v8.2M279.7,524.0h8.2M283.8,519.9v8.2M279.9,523.9h8.2M284.0,519.8v8.2M281.2,523.3h8.2M285.3,519.2v8.2M283.0,523.2h8.2M287.1,519.1v8.2M283.9,523.1h8.2M288.0,519.0v8.2M285.3,522.5h8.2M289.4,518.4v8.2" stroke="#0000ff" stroke-width="1.15" fill="none"/><rect x="187.2" y="646.5" width="8.3" height="2.0" fill="#0f74bd" stroke="#0a0a0a" stroke-width="1"/><rect x="208.5" y="642.5" width="8.3" height="6.0" fill="#0f74bd" stroke="#0a0a0a" stroke-width="1"/><rect x="219.1" y="626.3" width="8.3" height="22.2" fill="#0f74bd" stroke="#0a0a0a" stroke-width="1"/><rect x="229.8" y="596.7" width="8.3" height="51.8" fill="#0f74bd" stroke="#0a0a0a" stroke-width="1"/><rect x="240.4" y="592.2" width="8.3" height="56.3" fill="#0f74bd" stroke="#0a0a0a" stroke-width="1"/><rect x="251.1" y="639.6" width="8.3" height="8.9" fill="#0f74bd" stroke="#0a0a0a" stroke-width="1"/><rect x="261.7" y="643.5" width="8.3" height="5.0" fill="#0f74bd" stroke="#0a0a0a" stroke-width="1"/><rect x="272.3" y="647.5" width="8.3" height="1.0" fill="#0f74bd" stroke="#0a0a0a" stroke-width="1"/><rect x="283.0" y="647.5" width="8.3" height="1.0" fill="#0f74bd" stroke="#0a0a0a" stroke-width="1"/><path d="M26.5,648.50L31.8,648.49L37.1,648.49L42.4,648.49L47.8,648.48L53.1,648.47L58.4,648.46L63.7,648.45L69.0,648.43L74.4,648.40L79.7,648.37L85.0,648.32L90.3,648.26L95.6,648.19L101.0,648.09L106.3,647.97L111.6,647.83L116.9,647.65L122.2,647.43L127.6,647.18L132.9,646.88L138.2,646.53L143.5,646.13L148.8,645.67L154.1,645.16L159.5,644.60L164.8,644.00L170.1,643.35L175.4,642.66L180.7,641.95L186.1,641.22L191.4,640.50L196.7,639.79L202.0,639.11L207.3,638.48L212.7,637.91L218.0,637.42L223.3,637.03L228.6,636.74L233.9,636.56L239.2,636.50L244.6,636.56L249.9,636.74L255.2,637.03L260.5,637.42L265.8,637.91L271.2,638.48L276.5,639.11L281.8,639.79L287.1,640.50L292.4,641.22L297.8,641.95L303.1,642.66L308.4,643.35L313.7,644.00L319.0,644.60L324.4,645.16L329.7,645.67L335.0,646.13L340.3,646.53L345.6,646.88L350.9,647.18L356.3,647.43L361.6,647.65L366.9,647.83L372.2,647.97L377.5,648.09L382.9,648.19L388.2,648.26L393.5,648.32L398.8,648.37L404.1,648.40L409.5,648.43L414.8,648.45L420.1,648.46L425.4,648.47L430.7,648.48L436.1,648.49L441.4,648.49L446.7,648.49L452.0,648.50" stroke="#f21a1a" stroke-width="1.1" fill="none"/></svg>
</body></html>
